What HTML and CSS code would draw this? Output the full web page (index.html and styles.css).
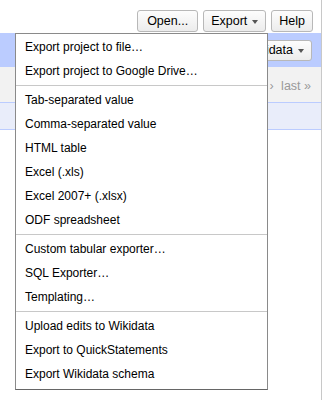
FILE: index.html
```html
<!DOCTYPE html>
<html lang="en">
<head>
    <meta charset="UTF-8">
    <meta name="viewport" content="width=device-width, initial-scale=1.0">
    <title>Export menu</title>
    <link rel="stylesheet" href="styles.css">
</head>
<body>
    <div class="page">
        <div class="toolbar">
            <button class="btn btn-open">Open...</button>
            <button class="btn">Export <span class="caret"></span></button>
            <button class="btn">Help</button>
        </div>
        <div class="header-band">
            <button class="btn btn-data">Wikidata <span class="caret"></span></button>
        </div>
        <div class="pager-band">
            <span class="pager">next &rsaquo; <span class="last">last &raquo;</span></span>
        </div>
        <div class="col-band"></div>
    </div>

    <div class="menu">
        <div class="item">Export project to file…</div>
        <div class="item">Export project to Google Drive…</div>
        <div class="sep"></div>
        <div class="item">Tab-separated value</div>
        <div class="item">Comma-separated value</div>
        <div class="item">HTML table</div>
        <div class="item">Excel (.xls)</div>
        <div class="item">Excel 2007+ (.xlsx)</div>
        <div class="item">ODF spreadsheet</div>
        <div class="sep"></div>
        <div class="item">Custom tabular exporter…</div>
        <div class="item">SQL Exporter…</div>
        <div class="item">Templating…</div>
        <div class="sep"></div>
        <div class="item">Upload edits to Wikidata</div>
        <div class="item">Export to QuickStatements</div>
        <div class="item">Export Wikidata schema</div>
    </div>
</body>
</html>
```

FILE: styles.css
```css
body { margin: 0; font-family: "Liberation Sans", Arial, sans-serif; font-size: 12px; color: #000; background: #fff; }
.page { width: 321px; height: 400px; border-right: 1px solid #c8c8c8; overflow: hidden; }
.toolbar { height: 33px; box-sizing: border-box; padding: 10px 8px 0 0; display: flex; justify-content: flex-end; align-items: flex-start; gap: 5px; }
.btn { font: 12.5px "Liberation Sans", Arial, sans-serif; color: #000; height: 22px; padding: 0 7px; border: 1px solid #b8b8b8; border-radius: 3px; background: linear-gradient(#fdfdfd, #ececec); display: inline-flex; align-items: center; gap: 5px; }
.btn-open { padding: 0 9px; }
.caret { width: 0; height: 0; border-left: 3.5px solid transparent; border-right: 3.5px solid transparent; border-top: 4px solid #555; margin-top: 1px; }
.header-band { height: 34px; background: #bbccff; display: flex; justify-content: flex-end; align-items: center; padding-right: 9px; }
.btn-data { height: 21px; }
.pager-band { height: 35px; background: #f2f2f2; display: flex; justify-content: flex-end; align-items: center; padding: 3px 10px 0 0; box-sizing: border-box; }
.pager { color: #999; font-size: 12.5px; }
.last { margin-left: 4px; }
.col-band { height: 26px; background: #e9edfa; border-top: 1px solid #bbccff; border-bottom: 1px solid #bbccff; }
.menu { position: absolute; left: 15px; top: 33px; width: 251px; background: #fff; border: 1px solid #8a8a8a; border-bottom-color: #666; padding: 1px 0 3px; }
.item { height: 24px; line-height: 24px; padding-left: 9px; white-space: nowrap; }
.sep { height: 1px; background: #c8c8c8; margin: 2px 0; }
```
